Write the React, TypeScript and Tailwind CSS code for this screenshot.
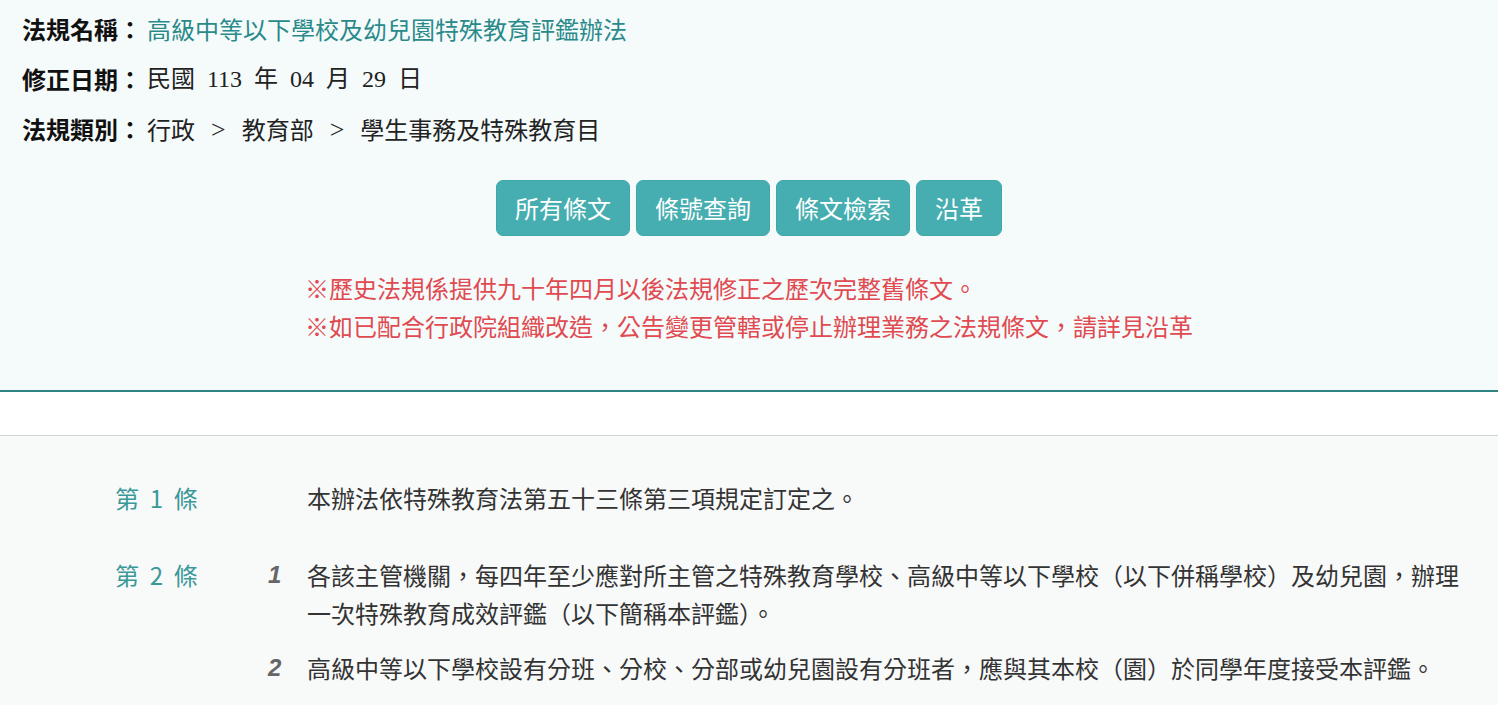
import React from "react";

const CJK = "font-['Noto_Sans_CJK_TC','Noto_Sans',sans-serif]";
const MIXED = "font-['Liberation_Serif','Noto_Sans_CJK_TC',serif]";

const BUTTONS = ["所有條文", "條號查詢", "條文檢索", "沿革"];

const ARTICLES = [
  { no: "第 1 條", paras: ["本辦法依特殊教育法第五十三條第三項規定訂定之。"], numbered: false },
  {
    no: "第 2 條",
    numbered: true,
    paras: [
      "各該主管機關，每四年至少應對所主管之特殊教育學校、高級中等以下學校（以下併稱學校）及幼兒園，辦理一次特殊教育成效評鑑（以下簡稱本評鑑）。",
      "高級中等以下學校設有分班、分校、分部或幼兒園設有分班者，應與其本校（園）於同學年度接受本評鑑。",
    ],
  },
];

const CATEGORY = ["行政", "教育部", "學生事務及特殊教育目"];

export default function App() {
  return (
    <div className={`min-h-[705px] bg-[#f8f9f9] ${CJK}`}>
      {/* Header info */}
      <div className="bg-[#f5fbfb] border-b-2 border-[#2e8383] shadow-[0_3px_4px_rgba(40,120,120,0.12)] pt-[4px] pb-[45px]">
        <div className="pl-[22px] text-[24px] text-[#222]">
          <div className="h-[50px] flex items-center">
            <span className="font-bold text-[#111] pr-[5px]">法規名稱：</span>
            <span className="text-[#2a8a8a]">高級中等以下學校及幼兒園特殊教育評鑑辦法</span>
          </div>
          <div className="h-[50px] flex items-center">
            <span className="font-bold text-[#111] pr-[5px]">修正日期：</span>
            <span className={`${MIXED} whitespace-pre`}>民國  113  年  04  月  29  日</span>
          </div>
          <div className="h-[50px] flex items-center">
            <span className="font-bold text-[#111] pr-[5px]">法規類別：</span>
            {CATEGORY.map((c, i) => (
              <span key={c} className="flex items-center">
                {i > 0 && <span className="font-['Liberation_Serif',serif] mx-[16px] text-[26px]">&gt;</span>}
                <span>{c}</span>
              </span>
            ))}
          </div>
        </div>

        <div className="mt-[26px] flex justify-center gap-[6px]">
          {BUTTONS.map((b) => (
            <button
              key={b}
              className="h-[56px] px-[18px] rounded-[7px] border border-[#41a7a9] bg-[#46aeb0] text-white text-[24px]"
            >
              {b}
            </button>
          ))}
        </div>

        <div className="mt-[33px] flex justify-center">
          <div className="text-[24px] leading-[38px] text-[#e04a50]">
            <p>※歷史法規係提供九十年四月以後法規修正之歷次完整舊條文。</p>
            <p>※如已配合行政院組織改造，公告變更管轄或停止辦理業務之法規條文，請詳見沿革</p>
          </div>
        </div>
      </div>

      <div className="h-[44px] bg-white border-b border-[#cfd6d6]" />

      {/* Articles */}
      <div className="pt-[43px] pr-[30px] flex flex-col gap-[39px]">
        {ARTICLES.map((a) => (
          <div key={a.no} className="flex text-[24px] leading-[38px]">
            <div className="w-[268px] shrink-0 pl-[115px] text-[#3a9898] whitespace-pre">{a.no.replace(/ /g, "  ")}</div>
            <div className="flex-1 flex flex-col gap-[17px]">
              {a.paras.map((p, i) => (
                <div key={i} className="flex">
                  <div className="w-[39px] shrink-0 font-['Liberation_Sans',sans-serif] italic font-bold text-[24px] text-[#666]">
                    {a.numbered ? i + 1 : ""}
                  </div>
                  <div className="flex-1 text-[#333]">{p}</div>
                </div>
              ))}
            </div>
          </div>
        ))}
      </div>
    </div>
  );
}
